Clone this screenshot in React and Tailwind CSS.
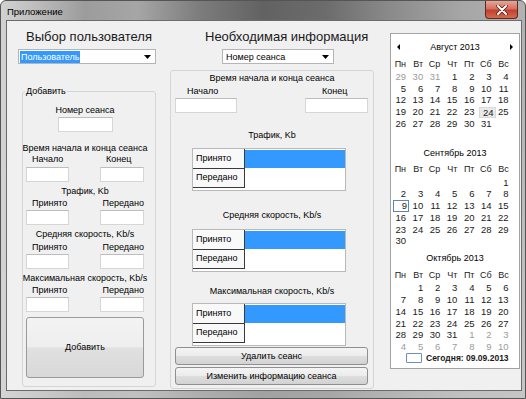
import React from "react";

const FONT = "font-['Liberation_Sans',Arial,sans-serif]";

function Field({ className }) {
  return <div className={"bg-white border border-[#d6d6d6] border-t-[#bdbdbd] " + className} />;
}

function Arrow() {
  return (
    <svg width="7" height="4" viewBox="0 0 7 4" className="ml-auto mr-[4px]">
      <path d="M0 0H7L3.5 4Z" fill="#000" />
    </svg>
  );
}

function WinButton({ className, children }) {
  return (
    <div
      className={
        "flex items-center justify-center rounded-[3px] border border-[#8f8f8f] bg-[linear-gradient(180deg,#f4f4f4_0%,#ececec_48%,#dedede_52%,#d2d2d2_100%)] text-[9px] leading-[11px] text-black " +
        className
      }
    >
      {children}
    </div>
  );
}

function PairLabels({ a, b, bOffset }) {
  return (
    <div className="flex pl-[6px] text-[9px] leading-[11px]">
      <span className={bOffset}>{a}</span>
      <span>{b}</span>
    </div>
  );
}

function PairFields() {
  return (
    <div className="flex">
      <Field className="w-[43px] h-[15px]" />
      <Field className="ml-[31px] w-[44px] h-[15px]" />
    </div>
  );
}

function Grid({ className }) {
  return (
    <div className={"ml-[21px] w-[154px] h-[43px] border border-[#b9b9b9] bg-white flex flex-col " + className}>
      <div className="flex h-[20px]">
        <div className="w-[52px] h-[20px] bg-[#f9f9f9] border-r border-b border-[#3a3a3a] pl-[3px] text-[9px] leading-[18px]">
          Принято
        </div>
        <div className="flex-1 mt-[1px] h-[18px] bg-[#3399ff]" />
      </div>
      <div className="flex h-[19px]">
        <div className="w-[52px] h-[19px] bg-[#f9f9f9] border-r border-b border-[#3a3a3a] pl-[3px] text-[9px] leading-[17px]">
          Передано
        </div>
        <div className="flex-1" />
      </div>
    </div>
  );
}

function range(a, b) {
  const r = [];
  for (let i = a; i <= b; i++) r.push(i);
  return r;
}

function pad(cells) {
  const out = cells.slice();
  while (out.length < 42) out.push(null);
  return out;
}

const months = [
  {
    title: "Август 2013",
    arrows: true,
    cells: pad([
      ...[29, 30, 31].map((d) => ({ d, g: true })),
      ...range(1, 31).map((d) => ({ d, hover: d === 24 })),
    ]),
  },
  {
    title: "Сентябрь 2013",
    cells: pad([null, null, null, null, null, null, ...range(1, 30).map((d) => ({ d, today: d === 9 }))]),
  },
  {
    title: "Октябрь 2013",
    cells: pad([null, ...range(1, 31).map((d) => ({ d })), ...range(1, 10).map((d) => ({ d, g: true }))]),
  },
];

const dayNames = ["Пн", "Вт", "Ср", "Чт", "Пт", "Сб", "Вс"];

function DayCell({ c }) {
  if (!c) return <div className="h-[11.7px]" />;
  let cls = "h-[11.7px] leading-[11.7px] text-right pr-[2px]";
  if (c.g) cls += " text-[#9c9c9c]";
  if (c.today) cls = "h-[12px] leading-[10px] text-right pr-[1px] border border-[#5f84b8] ml-[2px] -mr-[1px]";
  if (c.hover) cls = "h-[11px] leading-[9.7px] text-right pr-[1px] border border-[#d9d9d9] bg-[#e9e9e9] ml-[3px] -mr-[2px] mt-[1px]";
  return <div className={cls}>{c.d}</div>;
}

function Month({ m }) {
  return (
    <div className="flex flex-col mb-[5.3px]">
      <div className="flex items-center h-[12px] px-[6px]">
        {m.arrows ? (
          <svg width="3" height="6" viewBox="0 0 3 6">
            <path d="M3 0V6L0 3Z" fill="#000" />
          </svg>
        ) : (
          <span className="w-[3px]" />
        )}
        <div className="flex-1 text-center text-[9px] leading-[12px]">{m.title}</div>
        {m.arrows ? (
          <svg width="3" height="6" viewBox="0 0 3 6">
            <path d="M0 0V6L3 3Z" fill="#000" />
          </svg>
        ) : (
          <span className="w-[3px]" />
        )}
      </div>
      <div className="mt-[4.5px] grid grid-cols-[repeat(7,17.1px)] text-[9px] text-[#1a1a1a]">
        {dayNames.map((n) => (
          <div key={n} className="h-[12px] leading-[12px] text-right pr-[2px]">
            {n}
          </div>
        ))}
      </div>
      <div className="mt-[1.5px] grid grid-cols-[repeat(7,17.1px)] text-[9.5px] text-[#1a1a1a]">
        {m.cells.map((c, i) => (
          <DayCell key={i} c={c} />
        ))}
      </div>
    </div>
  );
}

export default function App() {
  return (
    <div className={"w-[526px] h-[399px] bg-white text-black " + FONT}>
      <div className="w-[526px] h-[399px] flex flex-col rounded-t-[6px] border border-[#555] bg-[image:linear-gradient(180deg,rgba(255,255,255,0)_0%,rgba(255,255,255,0)_5%,rgba(215,215,215,0.55)_100%),linear-gradient(90deg,#d2d2d2_0%,#bcbcbc_7%,#9c9c9c_16%,#a6a6a6_26%,#7c7c7c_38%,#626262_50%,#6c6c6c_62%,#8a8a8a_74%,#a6a6a6_88%,#b2b2b2_100%)]">
        {/* Title bar */}
        <div className="h-[19px] flex items-start">
          <span className="pl-[6px] pt-[5px] text-[9.5px] leading-[11px] text-black">Приложение</span>
          <div className="ml-auto mr-[7px] w-[33px] h-[18px] rounded-b-[4px] border border-t-0 border-[#5b2a22] bg-[linear-gradient(180deg,#e8a697_0%,#d6705f_45%,#c2412f_55%,#d46a4f_100%)] flex items-center justify-center">
            <svg width="12" height="10" viewBox="0 0 12 10">
              <path d="M2 1L10 9M10 1L2 9" stroke="#4a1a12" strokeWidth="3.4" strokeLinecap="round" />
              <path d="M2 1L10 9M10 1L2 9" stroke="#fff" strokeWidth="2" strokeLinecap="round" />
            </svg>
          </div>
        </div>

        {/* Client area */}
        <div className="ml-[5px] w-[516px] h-[371px] border border-[#6b6b6b] bg-[#f0f0f0] flex items-start">
          {/* Column 1 */}
          <div className="ml-[11px] w-[138px] flex flex-col">
            <div className="mt-[8px] pl-[4px] text-center text-[13px] leading-[16px] whitespace-nowrap text-[#1a1a1a]">
              Выбор пользователя
            </div>
            <div className="mt-[4px] h-[15px] w-[138px] bg-white border border-[#b5b5b5] flex items-center pl-[1px]">
              <span className="bg-[#3399ff] text-white text-[9px] leading-[12px] px-[1px]">Пользователь</span>
              <Arrow />
            </div>
            <div className="relative mt-[27px] ml-[4px] w-[134px] h-[296px] border border-[#d0d6da] rounded-[3px]">
              <span className="absolute left-[2px] top-[-6px] px-[1px] bg-[#f0f0f0] text-[9px] leading-[11px]">Добавить</span>
              <div className="ml-[3px] w-[118px] flex flex-col text-[9px] leading-[11px]">
                <div className="mt-[13px] flex justify-center whitespace-nowrap">Номер сеанса</div>
                <Field className="mt-[1px] self-center w-[55px] h-[15px]" />
                <div className="mt-[11px] flex justify-center whitespace-nowrap">Время начала и конца сеанса</div>
                <PairLabels a="Начало" b="Конец" bOffset="w-[74px]" />
                <div className="mt-[2px]">
                  <PairFields />
                </div>
                <div className="mt-[4px] flex justify-center whitespace-nowrap">Трафик, Kb</div>
                <div className="mt-[1px]">
                  <PairLabels a="Принято" b="Передано" bOffset="w-[73px]" />
                </div>
                <div className="mt-[1px]">
                  <PairFields />
                </div>
                <div className="mt-[4px] flex justify-center whitespace-nowrap">Средняя скорость, Kb/s</div>
                <div className="mt-[2px]">
                  <PairLabels a="Принято" b="Передано" bOffset="w-[73px]" />
                </div>
                <div className="mt-[1px]">
                  <PairFields />
                </div>
                <div className="mt-[4px] flex justify-center whitespace-nowrap">Максимальная скорость, Kb/s</div>
                <div className="mt-[1px]">
                  <PairLabels a="Принято" b="Передано" bOffset="w-[73px]" />
                </div>
                <div className="mt-[1px]">
                  <PairFields />
                </div>
                <div className="mt-[5px] h-[61px] w-[118px] rounded-[3px] border border-[#9a9a9a] bg-[linear-gradient(180deg,#f3f3f3_0%,#eeeeee_48%,#e0e0e0_52%,#d8d8d8_100%)] flex items-center justify-center">
                  Добавить
                </div>
              </div>
            </div>
          </div>

          {/* Column 2 */}
          <div className="ml-[14px] w-[204px] flex flex-col">
            <div className="mt-[8px] pl-[35px] text-[13px] leading-[16px] whitespace-nowrap text-[#1a1a1a]">
              Необходимая информация
            </div>
            <div className="mt-[4px] ml-[52px] h-[15px] w-[112px] bg-white border border-[#b5b5b5] flex items-center pl-[3px]">
              <span className="text-[9px] leading-[12px]">Номер сеанса</span>
              <Arrow />
            </div>
            <div className="mt-[6px] w-[204px] h-[319px] border border-[#d0d6da] rounded-[3px] flex flex-col text-[9px] leading-[11px]">
              <div className="mt-[2px] flex justify-center whitespace-nowrap">Время начала и конца сеанса</div>
              <div className="mt-[2px] flex pl-[16px]">
                <span className="w-[135px]">Начало</span>
                <span>Конец</span>
              </div>
              <div className="mt-[1px] flex pl-[4px]">
                <Field className="w-[62px] h-[15px]" />
                <Field className="ml-[68px] w-[63px] h-[15px]" />
              </div>
              <div className="mt-[17px] flex justify-center whitespace-nowrap">Трафик, Kb</div>
              <Grid className="mt-[7px]" />
              <div className="mt-[19px] flex justify-center whitespace-nowrap">Средняя скорость, Kb/s</div>
              <Grid className="mt-[8px]" />
              <div className="mt-[14px] flex justify-center whitespace-nowrap">Максимальная скорость, Kb/s</div>
              <Grid className="mt-[6px]" />
              <WinButton className="mt-[1px] ml-[4px] w-[193px] h-[18px]">Удалить сеанс</WinButton>
              <WinButton className="mt-[2px] ml-[4px] w-[193px] h-[18px]">Изменить информацию сеанса</WinButton>
            </div>
          </div>

          {/* Column 3: calendar */}
          <div className="ml-[16px] mt-[12px] w-[130px] h-[336px] bg-white border border-[#a3a3a3] flex flex-col">
            <div className="pt-[7px] flex flex-col">
              {months.map((m) => (
                <Month key={m.title} m={m} />
              ))}
            </div>
            <div className="flex items-center pl-[15px] -mt-[5px]">
              <div className="w-[16px] h-[10px] border border-[#6f8fba] rounded-[1px]" />
              <span className="ml-[4px] text-[8.5px] leading-[11px] font-bold text-[#1a1a1a]">Сегодня: 09.09.2013</span>
            </div>
          </div>
        </div>
      </div>
    </div>
  );
}
